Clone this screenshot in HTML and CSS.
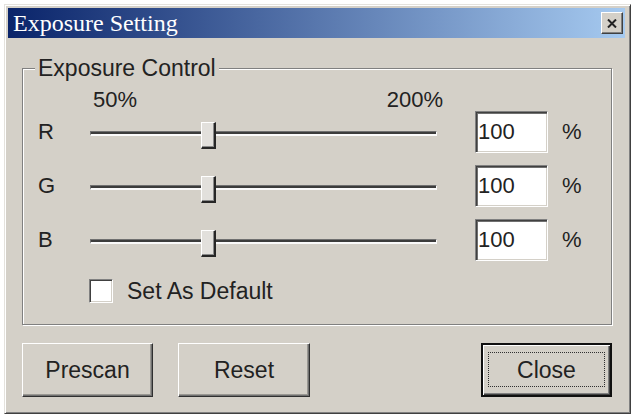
FILE: index.html
```html
<!DOCTYPE html>
<html>
<head>
<meta charset="utf-8">
<title>Exposure Setting</title>
<link rel="stylesheet" href="styles.css">
</head>
<body>
<div class="window">
  <div class="titlebar">
    <span class="title">Exposure Setting</span>
    <button class="tb-close" aria-label="Close">
      <svg width="10" height="9" viewBox="0 0 10 9"><path d="M1 0.5 L9 8.5 M9 0.5 L1 8.5" stroke="#222" stroke-width="2" fill="none"/></svg>
    </button>
  </div>
  <div class="content">
    <div class="group">
      <div class="legend">Exposure Control</div>
      <div class="scale"><span>50%</span><span>200%</span></div>
      <div class="rows">
        <div class="row">
          <span class="ch">R</span>
          <div class="slider"><div class="track"></div><div class="thumb" style="left:111px"></div></div>
          <div class="num">100</div>
          <span class="pct">%</span>
        </div>
        <div class="row">
          <span class="ch">G</span>
          <div class="slider"><div class="track"></div><div class="thumb" style="left:111px"></div></div>
          <div class="num">100</div>
          <span class="pct">%</span>
        </div>
        <div class="row">
          <span class="ch">B</span>
          <div class="slider"><div class="track"></div><div class="thumb" style="left:111px"></div></div>
          <div class="num">100</div>
          <span class="pct">%</span>
        </div>
      </div>
      <label class="check"><span class="box"></span><span class="check-text">Set As Default</span></label>
    </div>
    <div class="buttons">
      <button class="btn btn-prescan">Prescan</button>
      <button class="btn btn-reset">Reset</button>
      <button class="btn btn-default"><span class="focus">Close</span></button>
    </div>
  </div>
</div>
</body>
</html>
```

FILE: styles.css
```css
html, body {
  margin: 0;
  padding: 0;
  background: #fff;
}
body {
  font-family: "Liberation Sans", Arial, sans-serif;
  color: #222;
}
.window {
  margin: 4px 0 0 4px;
  width: 627px;
  height: 410px;
  box-sizing: border-box;
  background: #d4d0c8;
  border: 1px solid;
  border-color: #e4e2dd #404040 #404040 #e4e2dd;
  box-shadow: inset 1px 1px 0 #fff, inset -1px -1px 0 #808080;
  padding: 3px 5px 3px 3px;
  display: flex;
  flex-direction: column;
}
.titlebar {
  height: 30px;
  flex: none;
  background: linear-gradient(to right, #0a246a, #a6caf0);
  display: flex;
  align-items: center;
  padding: 0 2px 0 5px;
}
.title {
  flex: 1;
  font-family: "Liberation Serif", "Times New Roman", serif;
  font-size: 24px;
  line-height: 30px;
  color: #fff;
  white-space: nowrap;
}
.tb-close {
  width: 22px;
  height: 22px;
  padding: 0;
  margin: 0;
  box-sizing: border-box;
  background: #d4d0c8;
  border: 1px solid;
  border-color: #fff #404040 #404040 #fff;
  box-shadow: inset -1px -1px 0 #808080;
  display: flex;
  align-items: center;
  justify-content: center;
}
.tb-close svg { display: block; }
.content {
  flex: 1;
  padding: 30px 13px 0 14px;
  display: flex;
  flex-direction: column;
}
.group {
  border: 1px solid #808080;
  box-shadow: inset 1px 1px 0 #fff, 1px 1px 0 #fff;
  padding: 0 0 21px 15px;
}
.legend {
  margin: -14px 0 0 -3px;
  padding: 0 3px;
  width: fit-content;
  background: #d4d0c8;
  font-size: 23px;
  line-height: 26px;
}
.scale {
  margin: 7px 0 0 55px;
  width: 350px;
  height: 23px;
  display: flex;
  justify-content: space-between;
  font-size: 22px;
  line-height: 23px;
}
.rows {
  display: flex;
  flex-direction: column;
  gap: 12px;
}
.row {
  display: flex;
  align-items: center;
  height: 42px;
}
.ch {
  width: 52px;
  font-size: 22px;
  line-height: 42px;
}
.slider {
  position: relative;
  width: 347px;
  height: 42px;
  display: flex;
  align-items: center;
}
.track {
  width: 100%;
  height: 5px;
  margin-top: 2px;
  box-sizing: border-box;
  background: #3c3c3c;
  border-top: 1px solid #707070;
  border-left: 1px solid #707070;
  border-bottom: 2px solid #fafafa;
  border-right: 1px solid #fafafa;
}
.thumb {
  position: absolute;
  top: 11px;
  width: 15px;
  height: 27px;
  box-sizing: border-box;
  background: #e2e0dc;
  border-top: 1px solid #fff;
  border-left: 1px solid #fff;
  border-right: 2px solid #262626;
  border-bottom: 2px solid #262626;
  box-shadow: inset -1px -1px 0 #8a8a8a;
}
.num {
  margin-left: 38px;
  width: 73px;
  height: 42px;
  box-sizing: border-box;
  background: #fff;
  border: 1px solid;
  border-color: #808080 #fff #fff #808080;
  box-shadow: inset 1px 1px 0 #404040, inset 2px 2px 0 #707070, inset -1px -1px 0 #d4d0c8;
  padding-left: 2px;
  font-size: 22px;
  line-height: 40px;
}
.pct {
  margin-left: 14px;
  font-size: 22px;
}
.check {
  margin: 18px 0 0 51px;
  display: flex;
  align-items: center;
  height: 24px;
}
.box {
  width: 24px;
  height: 24px;
  box-sizing: border-box;
  background: #fff;
  border: 1px solid;
  border-color: #808080 #fff #fff #808080;
  box-shadow: inset 1px 1px 0 #404040, inset -1px -1px 0 #d4d0c8;
}
.check-text {
  margin-left: 14px;
  font-size: 23px;
  line-height: 24px;
}
.buttons {
  margin-top: 18px;
  display: flex;
}
.btn {
  height: 54px;
  box-sizing: border-box;
  padding: 0;
  margin: 0;
  background: #d4d0c8;
  border: 1px solid;
  border-color: #fff #303030 #303030 #fff;
  box-shadow: inset -1px -1px 0 #707070, inset -2px -2px 0 #9a9893;
  font-family: "Liberation Sans", Arial, sans-serif;
  font-size: 23px;
  color: #222;
}
.btn-prescan { width: 131px; }
.btn-reset { width: 132px; margin-left: 25px; }
.btn-default {
  width: 131px;
  margin-left: auto;
  position: relative;
  border: 2px solid #101010;
  box-shadow: inset 1px 1px 0 #fff, inset -1px -1px 0 #404040, inset -2px -2px 0 #808080;
}
.btn-default::after {
  content: "";
  position: absolute;
  top: 7px;
  left: 5px;
  right: 5px;
  bottom: 8px;
  border: 1px dotted #303030;
}
.focus { position: relative; }
```
